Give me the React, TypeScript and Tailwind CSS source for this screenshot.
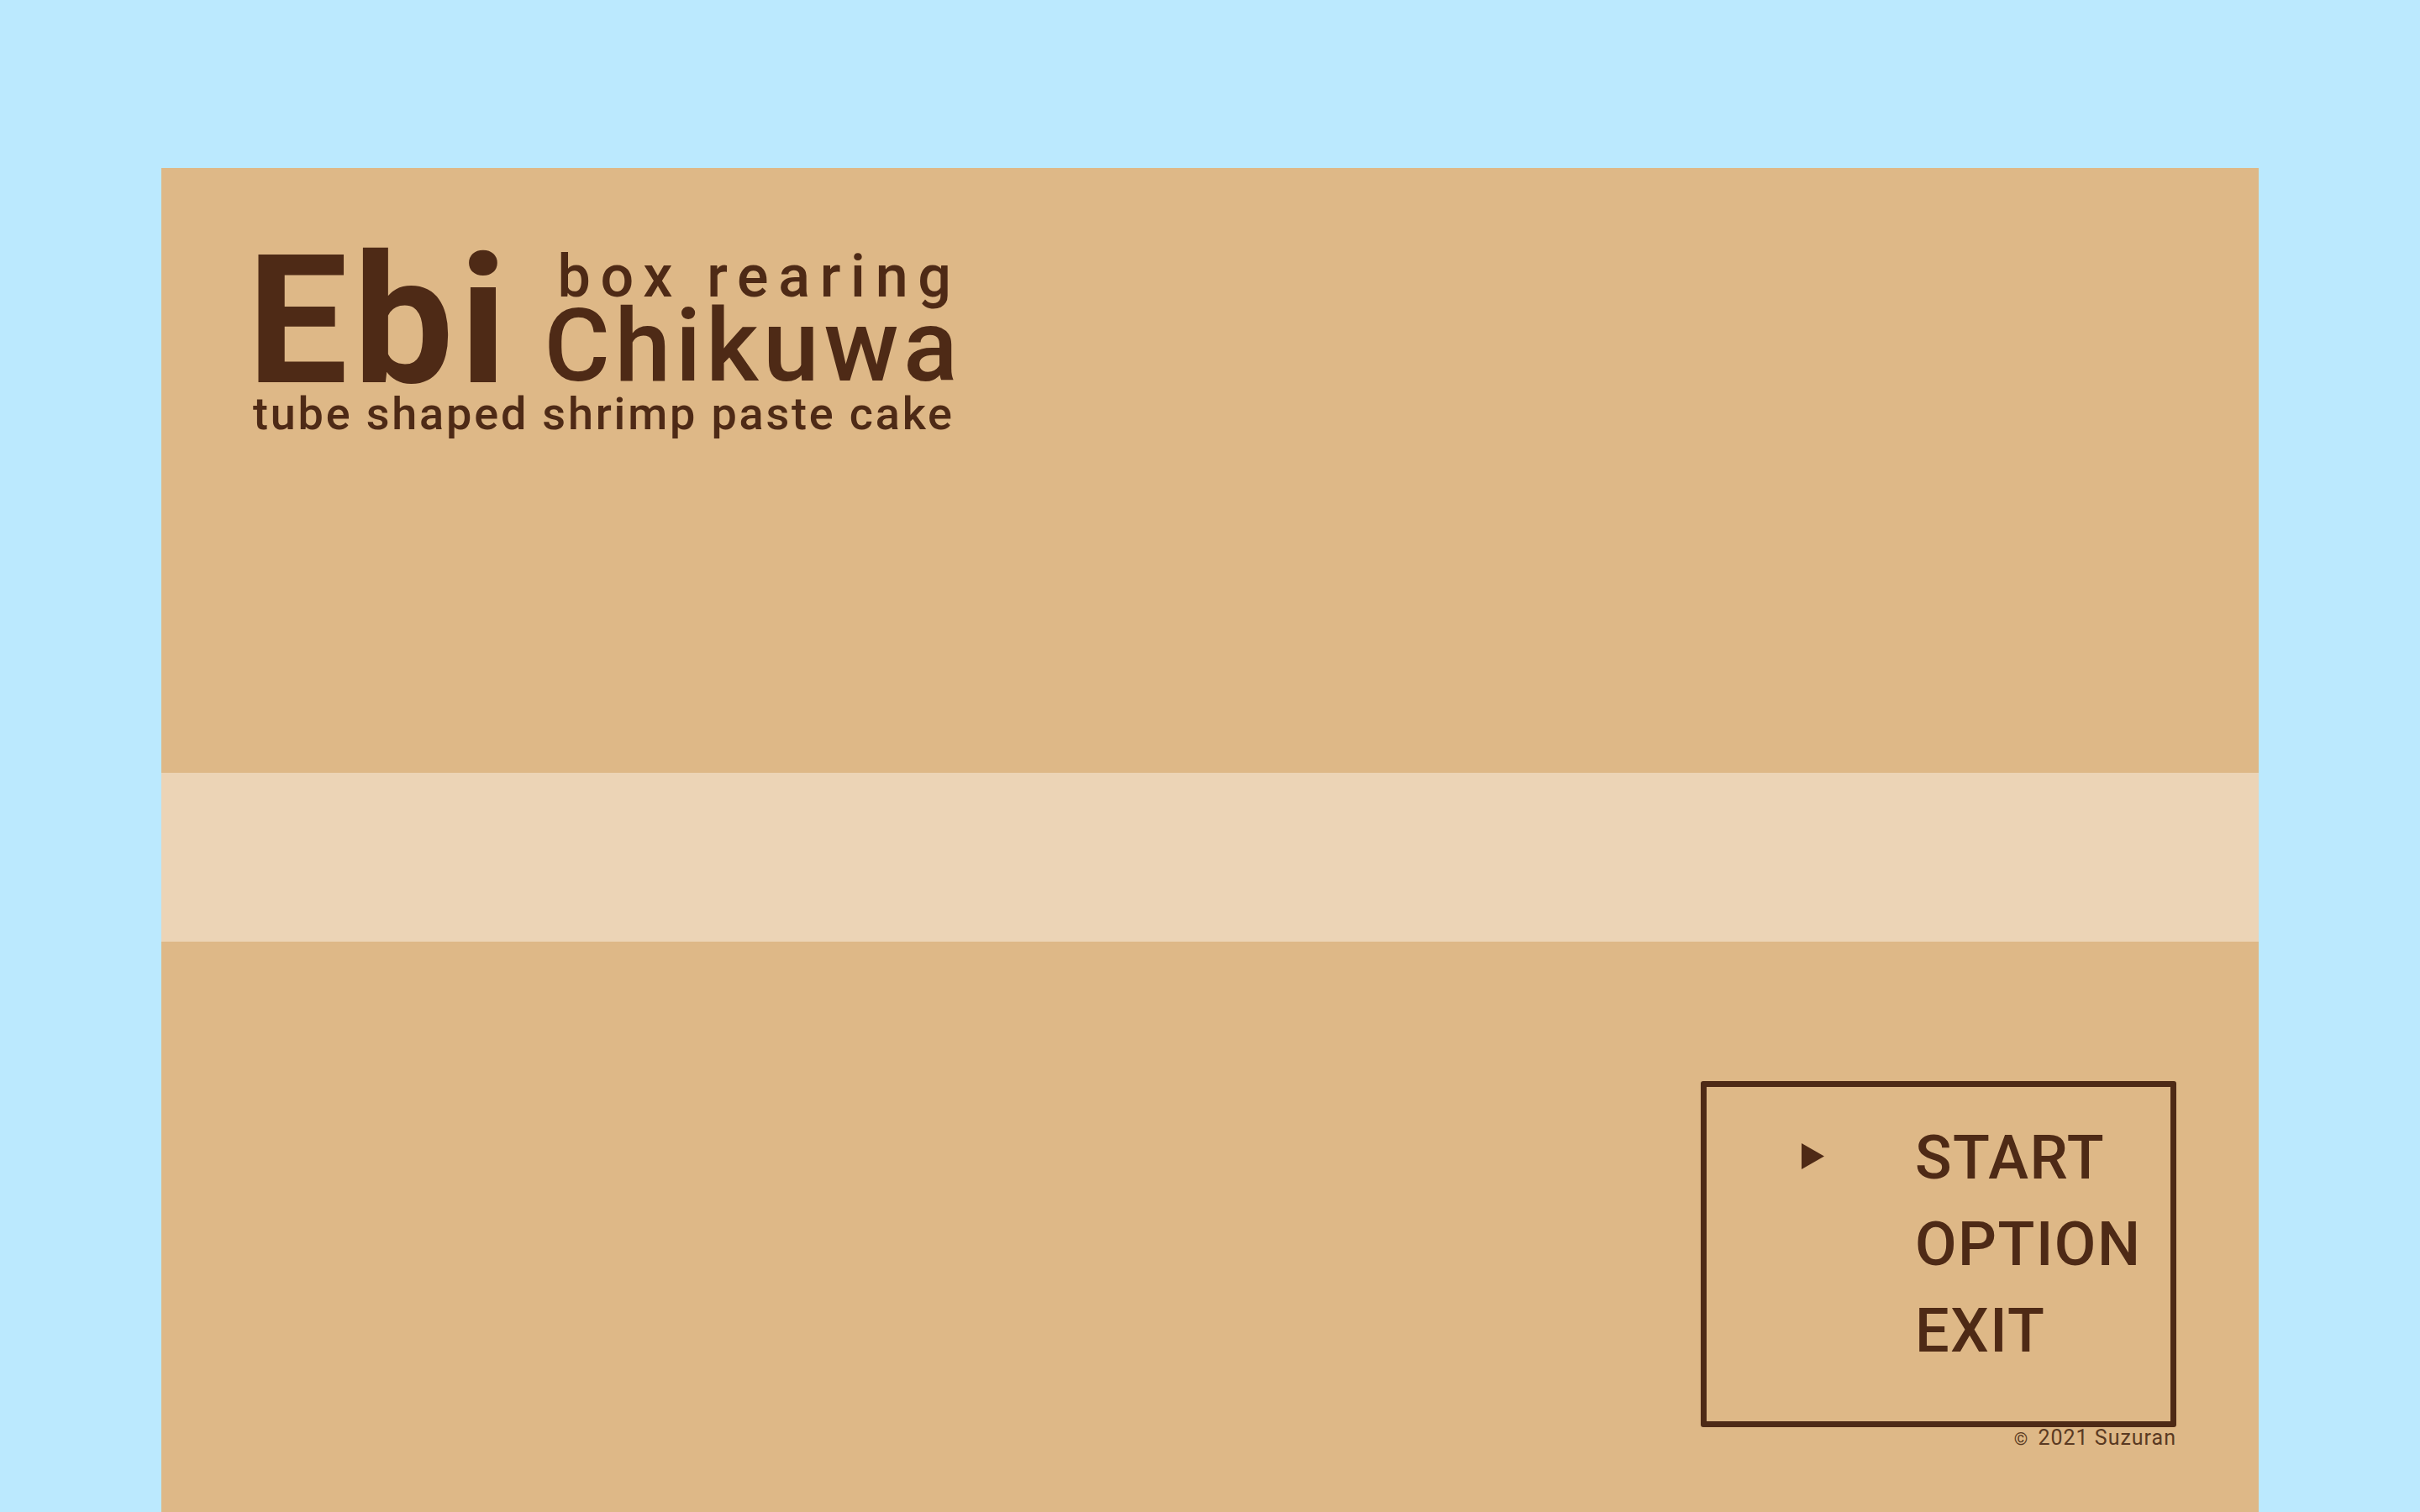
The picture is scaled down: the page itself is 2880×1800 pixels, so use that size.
import React from 'react';

const menuItems = ['START', 'OPTION', 'EXIT'];

export default function App() {
  return (
    <div className="h-screen w-full overflow-hidden bg-[#bbe9fe] px-[192px] pt-[200px] font-['Roboto',sans-serif] text-[#4e2a16]">
      <div className="flex h-full flex-col bg-[#deb887]">
        {/* Title */}
        <div className="h-[720px] pl-[109px] pt-[98px]">
          <div className="flex items-start">
            <span className="-ml-[7px] mt-[4px] text-[213px] font-bold leading-[160px] tracking-[6.5px]">Ebi</span>
            <div className="ml-[38px] flex flex-col">
              <span className="ml-[16px] text-[70px] font-medium leading-[62px] tracking-[11.7px]">box rearing</span>
              <span className="mt-[4px] text-[120px] font-medium leading-[96px] tracking-[5.6px]">Chikuwa</span>
            </div>
          </div>
          <div className="mt-[6px] text-[54px] font-medium leading-[50px] tracking-[2.8px]">
            tube shaped shrimp paste cake
          </div>
        </div>

        {/* Stripe */}
        <div className="h-[201px] bg-[#ecd4b6]" />

        {/* Menu */}
        <div className="flex flex-1 justify-end pr-[98px] pt-[166px]">
          <div className="flex flex-col items-end">
            <div className="h-[412px] w-[566px] rounded-[3px] border-[7px] border-[#4e2a16] pl-[113px] pt-[33px]">
              {menuItems.map((item, i) => (
                <div key={item} className="flex h-[103px] items-center">
                  <div className="w-[135px]">
                    {i === 0 && (
                      <svg width="27" height="31" viewBox="0 0 27 31" className="mt-[-4px]">
                        <polygon points="0,0 27,15.5 0,31" fill="#4e2a16" />
                      </svg>
                    )}
                  </div>
                  <span className="text-[72px] font-medium leading-[103px] tracking-[1.5px]">{item}</span>
                </div>
              ))}
            </div>
            <span className="text-[25px] leading-none tracking-[1px] text-[#5a3a22]">
              <span className="mr-[4px] text-[21px]">©</span> 2021 Suzuran
            </span>
          </div>
        </div>
      </div>
    </div>
  );
}
